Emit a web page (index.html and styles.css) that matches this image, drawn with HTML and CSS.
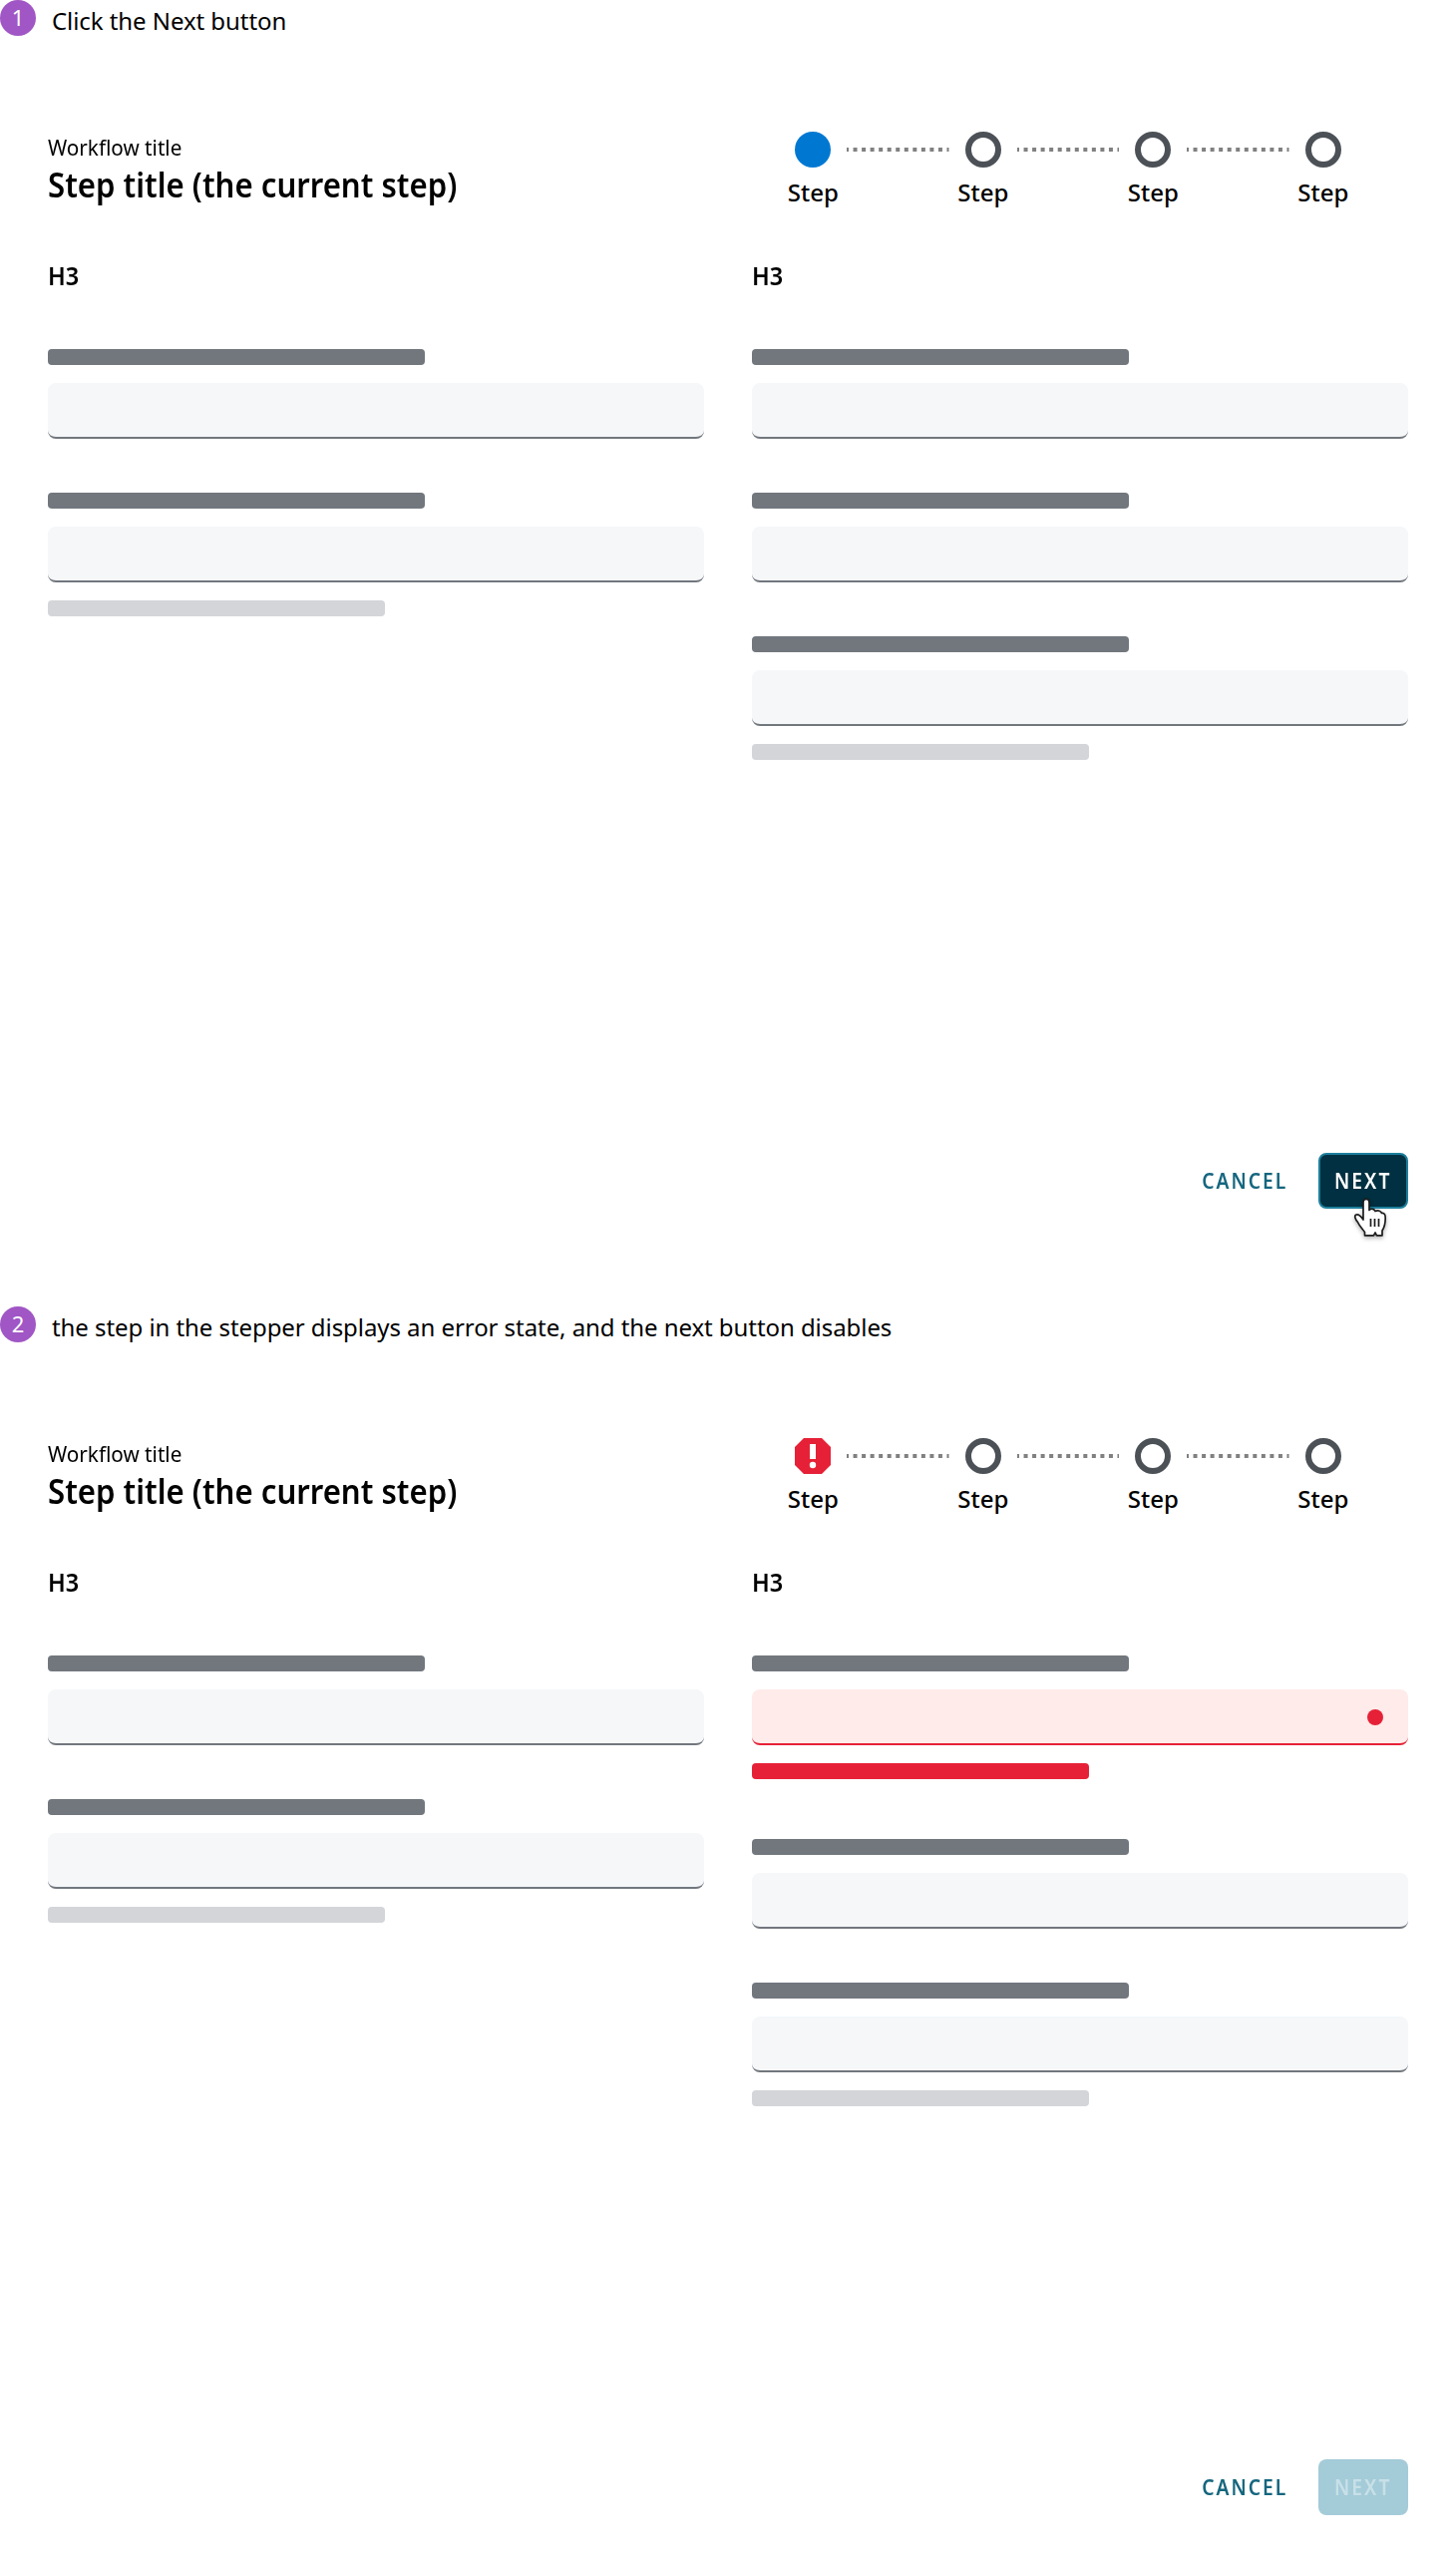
FILE: index.html
```
<!DOCTYPE html>
<html lang="en">
<head>
<meta charset="utf-8">
<title>Workflow stepper error</title>
<link rel="stylesheet" href="styles.css">
</head>
<body>
<section class="example">
  <header class="caption"><span class="badge">1</span><p class="caption-text">Click the Next button</p></header>
  <div class="workflow">
    <div class="top">
      <div class="titles">
        <p class="workflow-title"><span class="fit">Workflow title</span></p>
        <h2 class="step-title"><span class="fit">Step title (the current step)</span></h2>
      </div>
      <ol class="stepper">
        <li class="step"><svg class="marker" viewBox="0 0 36 36"><circle cx="18" cy="18" r="18" fill="#0078d2"/></svg><span>Step</span></li>
        <li class="line"><svg class="dots" viewBox="0 0 102.500 4"><path d="M0 2H102.500"/></svg></li>
        <li class="step"><svg class="marker" viewBox="0 0 36 36"><circle cx="18" cy="18" r="15" fill="none" stroke="#4c5157" stroke-width="6"/></svg><span>Step</span></li>
        <li class="line"><svg class="dots" viewBox="0 0 102.500 4"><path d="M0 2H102.500"/></svg></li>
        <li class="step"><svg class="marker" viewBox="0 0 36 36"><circle cx="18" cy="18" r="15" fill="none" stroke="#4c5157" stroke-width="6"/></svg><span>Step</span></li>
        <li class="line"><svg class="dots" viewBox="0 0 102.500 4"><path d="M0 2H102.500"/></svg></li>
        <li class="step"><svg class="marker" viewBox="0 0 36 36"><circle cx="18" cy="18" r="15" fill="none" stroke="#4c5157" stroke-width="6"/></svg><span>Step</span></li>
      </ol>
    </div>
    <div class="columns">
      <div class="column">
        <h3 class="heading"><span class="fit">H3</span></h3>
        <div class="field"><div class="label"></div><div class="input"></div></div>
        <div class="field"><div class="label"></div><div class="input"></div><div class="helper"></div></div>
      </div>
      <div class="column">
        <h3 class="heading"><span class="fit">H3</span></h3>
        <div class="field"><div class="label"></div><div class="input"></div></div>
        <div class="field"><div class="label"></div><div class="input"></div></div>
        <div class="field"><div class="label"></div><div class="input"></div><div class="helper"></div></div>
      </div>
    </div>
    <footer class="actions">
      <button class="cancel"><span class="fit">CANCEL</span></button>
      <button class="next hovered"><span class="fit">NEXT</span>
        <svg class="pointer" viewBox="0 0 36 44"><path d="M13 23V5.500C13 1.300 19 1.300 19 5.500V13.500C21 11.500 24 12 25 14.500C28 13 31 14.500 31.500 16.500C34.500 16 35.200 18.500 35.200 21.500C35.200 28 34 31 32 34V38.800H26.500L25 36L23.500 38.800H14.500V35.500C12 32 9 29 7.500 25.500C5 22.500 3.500 19 6 18C9 17 11 20 13 23Z" fill="#fff" stroke="#1c1c1c" stroke-width="1.700" stroke-linejoin="round"/><path d="M20.500 22V30M24.500 22V30M28.500 22V30" stroke="#1c1c1c" stroke-width="1.700"/></svg>
      </button>
    </footer>
  </div>
</section>
<section class="example">
  <header class="caption"><span class="badge">2</span><p class="caption-text">the step in the stepper displays an error state, and the next button disables</p></header>
  <div class="workflow">
    <div class="top">
      <div class="titles">
        <p class="workflow-title"><span class="fit">Workflow title</span></p>
        <h2 class="step-title"><span class="fit">Step title (the current step)</span></h2>
      </div>
      <ol class="stepper">
        <li class="step"><svg class="marker" viewBox="0 0 36 36"><path d="M9 0H27L36 9V27L27 36H9L0 27V9Z" fill="#e62137"/><path d="M15 6H21V21H15Z" fill="#fff"/><circle cx="18" cy="27" r="3.200" fill="#fff"/></svg><span>Step</span></li>
        <li class="line"><svg class="dots" viewBox="0 0 102.500 4"><path d="M0 2H102.500"/></svg></li>
        <li class="step"><svg class="marker" viewBox="0 0 36 36"><circle cx="18" cy="18" r="15" fill="none" stroke="#4c5157" stroke-width="6"/></svg><span>Step</span></li>
        <li class="line"><svg class="dots" viewBox="0 0 102.500 4"><path d="M0 2H102.500"/></svg></li>
        <li class="step"><svg class="marker" viewBox="0 0 36 36"><circle cx="18" cy="18" r="15" fill="none" stroke="#4c5157" stroke-width="6"/></svg><span>Step</span></li>
        <li class="line"><svg class="dots" viewBox="0 0 102.500 4"><path d="M0 2H102.500"/></svg></li>
        <li class="step"><svg class="marker" viewBox="0 0 36 36"><circle cx="18" cy="18" r="15" fill="none" stroke="#4c5157" stroke-width="6"/></svg><span>Step</span></li>
      </ol>
    </div>
    <div class="columns">
      <div class="column">
        <h3 class="heading"><span class="fit">H3</span></h3>
        <div class="field"><div class="label"></div><div class="input"></div></div>
        <div class="field"><div class="label"></div><div class="input"></div><div class="helper"></div></div>
      </div>
      <div class="column">
        <h3 class="heading"><span class="fit">H3</span></h3>
        <div class="field invalid"><div class="label"></div><div class="input"><i class="dot"></i></div><div class="helper"></div></div>
        <div class="field"><div class="label"></div><div class="input"></div></div>
        <div class="field"><div class="label"></div><div class="input"></div><div class="helper"></div></div>
      </div>
    </div>
    <footer class="actions">
      <button class="cancel"><span class="fit">CANCEL</span></button>
      <button class="next" disabled><span class="fit">NEXT</span></button>
    </footer>
  </div>
</section>
</body>
</html>
```
FILE: styles.css
```
* { box-sizing: border-box; margin: 0; padding: 0; }
body {
  width: 1460px;
  background: #fff;
  color: #000;
  font-family: "Noto Sans", sans-serif;
}
.example { height: 1310px; overflow: hidden; }
.example:last-child { height: 1260px; }
.caption { display: flex; gap: 16px; height: 36px; }
.badge {
  width: 36px;
  height: 36px;
  border-radius: 50%;
  background: #a056c4;
  color: #fff;
  font-size: 22px;
  font-weight: 400;
  line-height: 35px;
  text-align: center;
}
.caption-text { font-size: 24px; line-height: 42px; letter-spacing: -0.065px; white-space: nowrap; }
.workflow {
  display: flex;
  flex-direction: column;
  width: 1460px;
  height: 1224px;
  padding: 96px 48px 48px;
}
.top { display: flex; height: 132px; }
.titles { width: 718px; }
.fit { display: inline-block; white-space: nowrap; transform: scaleX(0.92); transform-origin: left center; }
.workflow-title { font-size: 22px; line-height: 30px; }
.workflow-title .fit { transform: scaleX(0.94); }
.step-title { font-size: 34px; font-weight: 600; line-height: 46px; }
.step-title .fit { transform: scaleX(0.916); }
.stepper { display: flex; list-style: none; padding-left: 15.300px; }
.step { display: flex; flex-direction: column; align-items: center; width: 68px; font-size: 24px; font-weight: 500; line-height: 32px; }
.marker { width: 36px; height: 36px; margin-bottom: 9px; }
.line { width: 102.500px; height: 4px; margin-top: 16px; }
.dots { display: block; width: 102.500px; height: 4px; fill: none; stroke: #808080; stroke-width: 4; stroke-dasharray: 4 4.540; stroke-dashoffset: 2; }
.columns { display: grid; grid-template-columns: 658px 658px; column-gap: 48px; flex: 1; align-content: start; }
.heading { height: 86px; font-size: 25.500px; font-weight: 650; line-height: 24px; }
.field { display: flex; flex-direction: column; gap: 18px; margin-bottom: 54px; }
.label { width: 378px; height: 16px; border-radius: 4px; background: #72777e; }
.input { display: flex; align-items: center; justify-content: flex-end; height: 56px; padding-right: 25px; border-radius: 8px; border-bottom: 2px solid #72777e; background: #f5f7f9; }
.helper { width: 338px; height: 16px; border-radius: 4px; background: #d3d5d9; }
.invalid { margin-bottom: 60px; }
.invalid .input { background: #ffebea; border-color: #e62137; }
.invalid .helper { background: #e62137; }
.dot { width: 16px; height: 16px; margin-top: 2px; border-radius: 50%; background: #e62137; }
.actions { display: flex; justify-content: flex-end; gap: 16px; }
button { display: flex; justify-content: center; height: 56px; border: 0; background: none; font-family: inherit; font-size: 22px; font-weight: 600; line-height: 55px; letter-spacing: 2.300px; }
button .fit { transform: scaleX(0.875); transform-origin: center; }
.cancel { width: 116px; padding-left: 1px; color: #15667f; }
.next { position: relative; width: 90px; border-radius: 8px; background: #003041; color: #fff; }
.hovered { border: 2px solid #1d7f9c; line-height: 51px; }
.next:disabled { background: #a4cbd8; color: #c8e0e8; }
.pointer { position: absolute; left: 30px; top: 42px; width: 36px; height: 44px; overflow: visible; filter: drop-shadow(0 2px 2px rgba(0, 0, 0, 0.3)); }
```
